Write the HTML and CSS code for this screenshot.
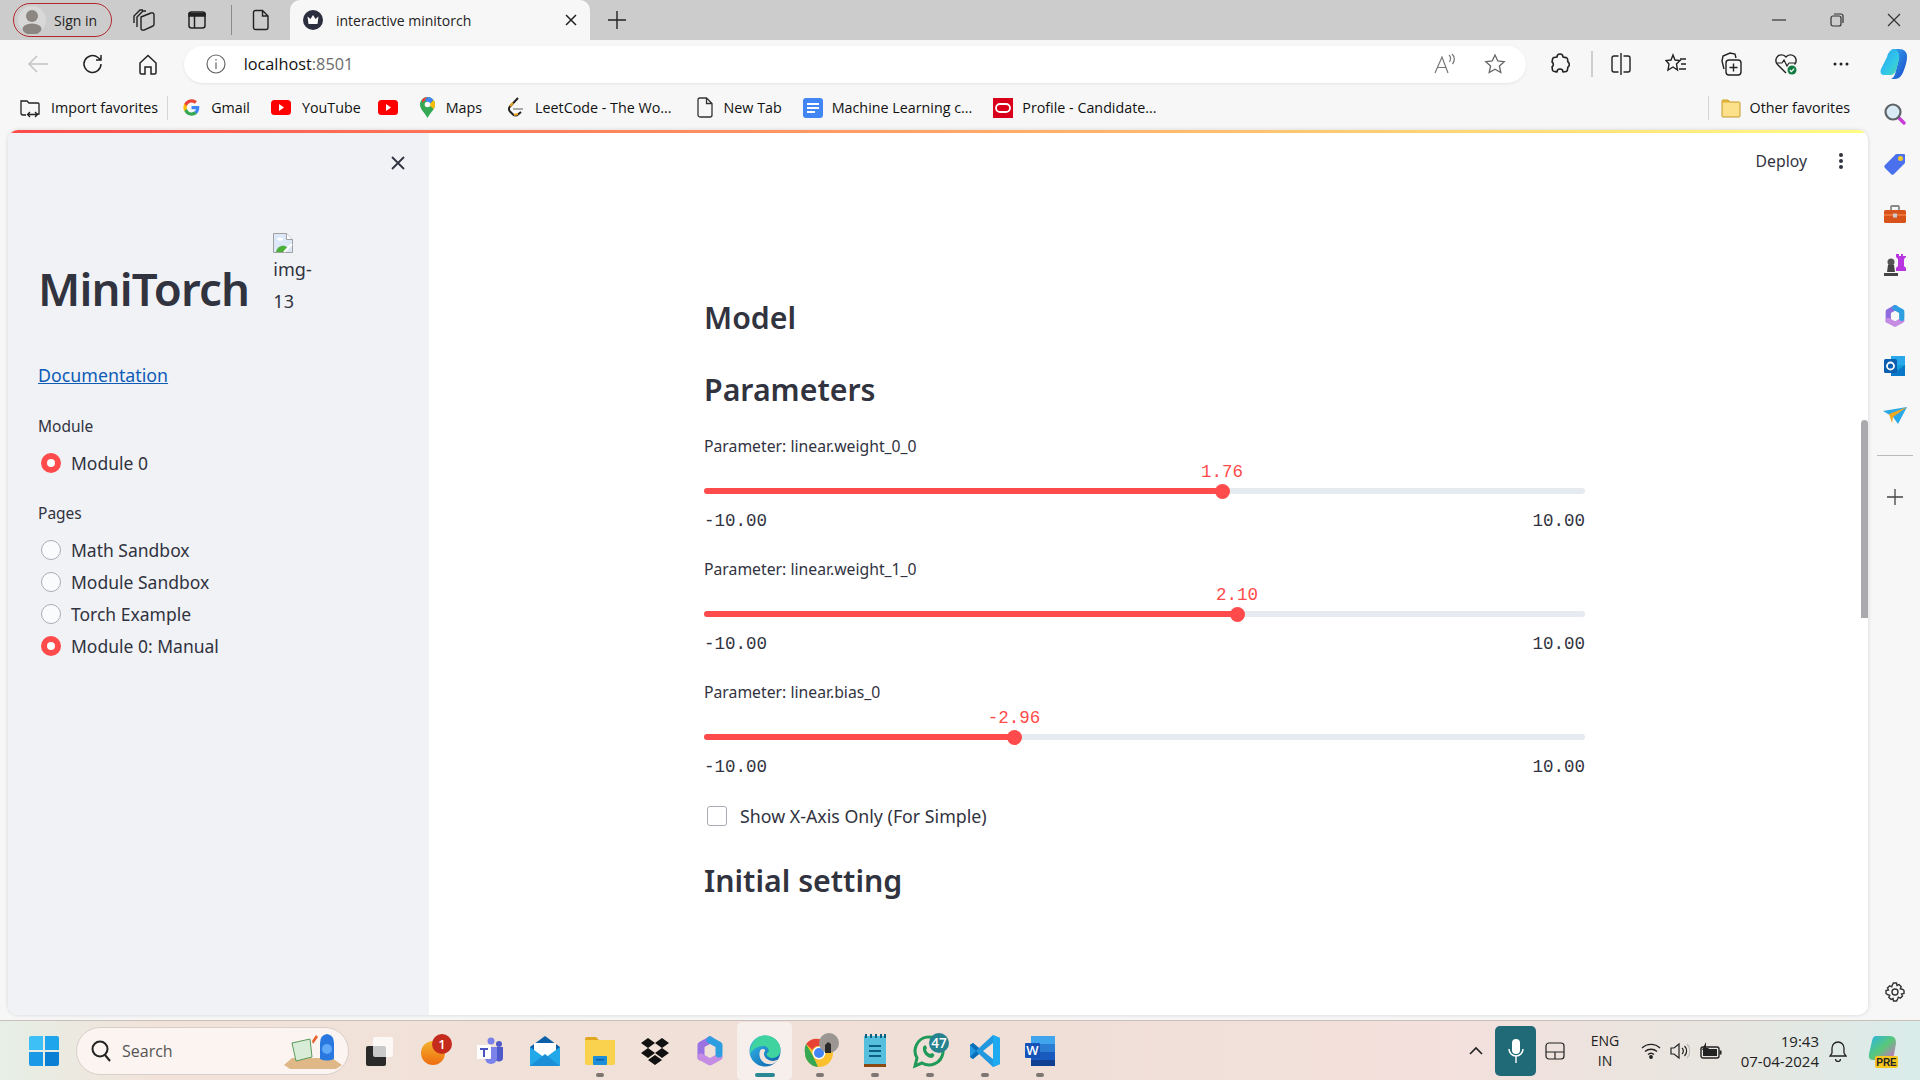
FILE: index.html
```html
<!DOCTYPE html>
<html lang="en">
<head>
    <meta charset="UTF-8">
    <title>interactive minitorch</title>
    <link rel="stylesheet" href="styles.css">
</head>
<body>
<div class="screen">
    <!-- tab strip -->
    <div class="tabstrip">
        <div class="signin">
            <svg width="28" height="28" viewBox="0 0 28 28"><circle cx="14" cy="14" r="14" fill="#d8d8d8"/><circle cx="14" cy="10" r="6" fill="#8b8681"/><ellipse cx="14" cy="23" rx="9.500" ry="5.500" fill="#8b8681"/></svg>
            <span>Sign in</span>
        </div>
        <div class="strip-btn first"><svg width="24" height="24" viewBox="0 0 24 24" fill="none" stroke="#222" stroke-width="1.400"><path d="M2 15V8l6-6h3M5 19V9l6-6h3"/><path d="M9 9l10-4a2 2 0 0 1 3 2v9a2 2 0 0 1-1 2l-9 4a2 2 0 0 1-3-2z" fill="#ccc"/></svg></div>
        <div class="strip-btn"><svg width="20" height="20" viewBox="0 0 20 20" fill="none" stroke="#222" stroke-width="1.500"><rect x="2" y="2" width="16" height="16" rx="2.500"/><path d="M2 3.500h16V6H2z" fill="#222"/><path d="M7.500 6v12"/></svg></div>
        <div class="strip-sep"></div>
        <div class="strip-btn"><svg width="18" height="22" viewBox="0 0 18 22" fill="none" stroke="#222" stroke-width="1.400"><path d="M3.500 1.500h7l5.500 5.500v11.500a2 2 0 0 1-2 2H3.500a2 2 0 0 1-2-2v-15a2 2 0 0 1 2-2zM10.500 1.500V7H16"/></svg></div>
        <div class="tab">
            <svg width="20" height="20" viewBox="0 0 20 20"><circle cx="10" cy="10" r="10" fill="#2c2f3d"/><path d="M4.500 6.500l3 2.500L10 5l2.500 4 3-2.500-1 7.500h-9z" fill="#fff"/></svg>
            <span class="tab-title">interactive minitorch</span>
            <svg class="tab-close" width="12" height="12" viewBox="0 0 12 12" stroke="#222" stroke-width="1.500"><path d="M1 1l10 10M11 1L1 11"/></svg>
        </div>
        <div class="new-tab"><svg width="18" height="18" viewBox="0 0 18 18" stroke="#222" stroke-width="1.400"><path d="M9 0v18M0 9h18"/></svg></div>
        <div class="window-btns">
            <svg width="14" height="14" viewBox="0 0 14 14" stroke="#333" stroke-width="1.200"><path d="M0 7h14"/></svg>
            <svg width="14" height="14" viewBox="0 0 14 14" fill="none" stroke="#333" stroke-width="1.200"><rect x="1" y="3" width="10" height="10" rx="2"/><path d="M4 1h7a2 2 0 0 1 2 2v7"/></svg>
            <svg width="14" height="14" viewBox="0 0 14 14" stroke="#333" stroke-width="1.200"><path d="M1 1l12 12M13 1L1 13"/></svg>
        </div>
    </div>

    <!-- address bar -->
    <div class="toolbar">
        <div class="tool"><svg width="22" height="20" viewBox="0 0 22 20" fill="none" stroke="#c4c4c4" stroke-width="1.500"><path d="M21 10H2M10 2l-8 8 8 8"/></svg></div>
        <div class="tool"><svg width="22" height="22" viewBox="0 0 22 22" fill="none" stroke="#222" stroke-width="1.500"><path d="M19 11a8.500 8.500 0 1 1-3-6.500l3 2.500M19 2v5h-5"/></svg></div>
        <div class="tool"><svg width="20" height="21" viewBox="0 0 20 21" fill="none" stroke="#222" stroke-width="1.500"><path d="M2 9l8-7.500L18 9v9.500a1.500 1.500 0 0 1-1.500 1.500H13v-7H7v7H3.500A1.500 1.500 0 0 1 2 18.500z"/></svg></div>
        <div class="addr">
            <svg width="20" height="20" viewBox="0 0 20 20" fill="none" stroke="#666" stroke-width="1.200"><circle cx="10" cy="10" r="9"/><path d="M10 8.500V15M10 5v1.500"/></svg>
            <span class="url">localhost<span class="url-port">:8501</span></span>
            <div class="addr-right">
                <svg width="24" height="22" viewBox="0 0 24 22" fill="none" stroke="#777" stroke-width="1.200"><path d="M2 20L9 4l6 16M4.500 14.500h9M16 2c2 1.500 2 5 .5 7M19 1c3 2.500 3 7 .5 10"/></svg>
                <svg width="22" height="22" viewBox="0 0 22 22" fill="none" stroke="#666" stroke-width="1.300"><path d="M11 2l2.800 6 6.400.7-4.800 4.300 1.400 6.500L11 16.200 5.200 19.500 6.600 13 1.800 8.700 8.200 8z"/></svg>
            </div>
        </div>
        <div class="tool ext"><svg width="20" height="22" viewBox="0 0 20 22" fill="none" stroke="#222" stroke-width="1.600" stroke-linejoin="round"><path d="M7 4a3 3 0 0 1 6 0c1 .5 3 .2 4 1s.5 3 1 4a3 3 0 0 1 0 5c-.5 1-.2 3-1 4s-3 .5-4 1a3 3 0 0 0-6 0c-1-.5-3-.2-4-1s-.5-3-1-4a3 3 0 0 0 0-5c.5-1 .2-3 1-4s3-.5 4-1z"/></svg></div>
        <div class="tool-sep"></div>
        <div class="tool"><svg width="20" height="22" viewBox="0 0 20 22" fill="none" stroke="#222" stroke-width="1.400"><path d="M10 0v22M7.500 3H3a2 2 0 0 0-2 2v12a2 2 0 0 0 2 2h4.500M12.500 3H17a2 2 0 0 1 2 2v12a2 2 0 0 1-2 2h-4.500"/></svg></div>
        <div class="tool"><svg width="22" height="22" viewBox="0 0 22 22" fill="none" stroke="#222" stroke-width="1.400"><path d="M8 2l2 5 5 .5-3.500 3.500 1 6L8 14l-5 3 1-6L1 7.500 6 7zM15 6h6M16 11h5M14 16h7"/></svg></div>
        <div class="tool"><svg width="22" height="24" viewBox="0 0 22 24" fill="none" stroke="#222" stroke-width="1.400"><path d="M4 17l-2-8 1-5 7-3 5 1 1 4"/><rect x="6" y="8" width="15" height="15" rx="3"/><path d="M13.500 11.500v8M9.500 15.500h8"/></svg></div>
        <div class="tool"><svg width="24" height="24" viewBox="0 0 24 24"><path d="M12 21L3.500 12.500a5.500 5.500 0 0 1 8-8l.5.500.5-.5a5.500 5.500 0 0 1 8 8" fill="none" stroke="#222" stroke-width="1.400"/><path d="M3 11h5l2-3 3 6 2-3h6" fill="none" stroke="#222" stroke-width="1.200"/><circle cx="18" cy="18" r="4.500" fill="#107c41"/><path d="M15.800 18l1.600 1.600 2.800-3" fill="none" stroke="#fff" stroke-width="1.200"/></svg></div>
        <div class="tool"><svg width="16" height="4" viewBox="0 0 16 4" fill="#222"><circle cx="2" cy="2" r="1.500"/><circle cx="8" cy="2" r="1.500"/><circle cx="14" cy="2" r="1.500"/></svg></div>
        <div class="tool copilot"><svg width="28" height="32" viewBox="0 0 28 32"><defs><linearGradient id="cpa" x1="0" y1="0" x2="1" y2="1"><stop offset="0" stop-color="#35a8f0"/><stop offset="1" stop-color="#1848c8"/></linearGradient><linearGradient id="cpb" x1="0" y1="0" x2="1" y2="1"><stop offset="0" stop-color="#2b9ff0"/><stop offset=".6" stop-color="#31c8e8"/><stop offset="1" stop-color="#4fd8a0"/></linearGradient></defs><path d="M11 1h8q8 0 8 8 0 5-3 13-3 9-9 9h-4q4-2 5-9l3-12q1-6-8-9z" fill="url(#cpa)"/><path d="M15 1q-6 0-8 8L1 21q-2 6 4 6h6q4 0 6-8l2-8q1-7-4-10z" fill="url(#cpb)"/></svg></div>
    </div>

    <!-- favorites bar -->
    <div class="favbar">
        <div class="fav import"><svg width="20" height="20" viewBox="0 0 20 20" fill="none" stroke="#222" stroke-width="1.300"><path d="M1 15V3h6l2 2h9a1 1 0 0 1 1 1v10H16M1 15a2 2 0 0 0 2 2h3M8 16.500h9M10 14l-2.500 2.500L10 19M15 14l2.500 2.500L15 19"/></svg><span>Import favorites</span></div>
        <div class="fav-sep"></div>
        <div class="fav"><svg width="17" height="17" viewBox="0 0 24 24"><path d="M23 12.300c0-.8-.1-1.600-.2-2.300H12v4.400h6.200a5.300 5.300 0 0 1-2.300 3.400v2.900h3.700c2.200-2 3.400-5 3.400-8.400z" fill="#4285f4"/><path d="M12 23.500c3.100 0 5.700-1 7.600-2.800l-3.700-2.900c-1 .7-2.300 1.100-3.900 1.100-3 0-5.500-2-6.400-4.800H1.800v3A11.500 11.500 0 0 0 12 23.500z" fill="#34a853"/><path d="M5.600 14.100a6.900 6.900 0 0 1 0-4.300v-3H1.800a11.500 11.500 0 0 0 0 10.300z" fill="#fbbc05"/><path d="M12 4.900c1.700 0 3.200.6 4.400 1.700l3.300-3.300A11.500 11.500 0 0 0 1.800 6.800l3.800 3C6.500 6.900 9 4.900 12 4.900z" fill="#ea4335"/></svg><span>Gmail</span></div>
        <div class="fav yt"><svg width="20" height="15" viewBox="0 0 20 15"><rect width="20" height="15" rx="3.500" fill="#f00"/><path d="M8 4l5 3.500L8 11z" fill="#fff"/></svg><span>YouTube</span></div>
        <div class="fav solo"><svg width="20" height="15" viewBox="0 0 20 15"><rect width="20" height="15" rx="3.500" fill="#f00"/><path d="M8 4l5 3.500L8 11z" fill="#fff"/></svg></div>
        <div class="fav maps"><svg width="15" height="21" viewBox="0 0 15 21"><path d="M7.500 21C5 16 0 12.500 0 7.500a7.500 7.500 0 0 1 15 0C15 12.500 10 16 7.500 21z" fill="#34a853"/><path d="M2 2.500a7.500 7.500 0 0 1 5.500-2.500l-3 4-2.500 1.500z" fill="#ea4335"/><path d="M7.500 0A7.500 7.500 0 0 1 13.500 3L10 7 5 3z" fill="#4285f4"/><path d="M13.500 3A7.500 7.500 0 0 1 15 7.500c0 1.500-.5 3-1.500 4.500L9 8z" fill="#fbbc05"/><circle cx="7.500" cy="7.500" r="2.800" fill="#fff"/></svg><span>Maps</span></div>
        <div class="fav leet"><svg width="17" height="21" viewBox="0 0 17 21" fill="none"><path d="M11 1L3 9.500a3.500 3.500 0 0 0 0 5l3 3a3.500 3.500 0 0 0 5 0l3-2.500" stroke="#222" stroke-width="2"/><path d="M6 12h10" stroke="#aaa" stroke-width="2"/><path d="M3 9l3-3M7 18l4-1" stroke="#f0a020" stroke-width="2"/></svg><span>LeetCode - The Wo...</span></div>
        <div class="fav"><svg width="16" height="21" viewBox="0 0 16 21" fill="none" stroke="#333" stroke-width="1.300"><path d="M3 1h6.500L15 6.500V18a2 2 0 0 1-2 2H3a2 2 0 0 1-2-2V3a2 2 0 0 1 2-2zM9.500 1v5.500H15"/></svg><span>New Tab</span></div>
        <div class="fav tight"><svg width="20" height="20" viewBox="0 0 20 20"><rect width="20" height="20" rx="3" fill="#4285f4"/><path d="M4 5h12v2H4zM4 9h12v2H4zM4 13h8v2H4z" fill="#fff"/></svg><span>Machine Learning c...</span></div>
        <div class="fav tight"><svg width="20" height="20" viewBox="0 0 20 20"><rect width="20" height="20" fill="#d9001b"/><rect x="3" y="6" width="14" height="8" rx="4" fill="none" stroke="#fff" stroke-width="1.800"/></svg><span>Profile - Candidate...</span></div>
        <div class="fav-sep other-sep"></div>
        <div class="fav other"><svg width="20" height="20" viewBox="0 0 20 20"><path d="M1 3a1 1 0 0 1 1-1h5l2 2h9a1 1 0 0 1 1 1v13a1 1 0 0 1-1 1H2a1 1 0 0 1-1-1z" fill="#fce08a" stroke="#c69a24"/><path d="M1 3a1 1 0 0 1 1-1h5l1.500 2.500H1z" fill="#e0b030"/></svg><span>Other favorites</span></div>
    </div>

    <!-- page + side panel -->
    <div class="middle">
        <div class="app">
            <div class="decoration"></div>
            <div class="app-body">
                <aside class="sidebar">
                    <div class="side-close"><svg width="14" height="14" viewBox="0 0 14 14" stroke="#31333f" stroke-width="1.800"><path d="M1 1l12 12M13 1L1 13"/></svg></div>
                    <div class="brand">
                        <h1 class="brand-name">MiniTorch</h1>
                        <div class="brand-img">
                            <svg width="20" height="20" viewBox="0 0 20 20"><path d="M.5.500h13l6 6v13H.5z" fill="#dce8f8" stroke="#a0a0a0"/><path d="M13.500.500v6h6" fill="#fff" stroke="#a0a0a0"/><path d="M3 19c1-5 5-7 9-6l3 2-4 4z" fill="#4caf3a"/><path d="M11 19l8-8" stroke="#fff" stroke-width="2"/><ellipse cx="7" cy="6" rx="3" ry="1.500" fill="#fff"/></svg>
                            <div>img-<br>13</div>
                        </div>
                    </div>
                    <a class="doc-link" href="#">Documentation</a>
                    <div class="side-label first">Module</div>
                    <div class="radios">
                        <div class="radio on"><i></i>Module 0</div>
                    </div>
                    <div class="side-label">Pages</div>
                    <div class="radios">
                        <div class="radio"><i></i>Math Sandbox</div>
                        <div class="radio"><i></i>Module Sandbox</div>
                        <div class="radio"><i></i>Torch Example</div>
                        <div class="radio on"><i></i>Module 0: Manual</div>
                    </div>
                </aside>
                <main class="main">
                    <div class="main-scroll">
                        <div class="app-header">
                            <span class="deploy">Deploy</span>
                            <svg width="6" height="18" viewBox="0 0 6 18" fill="#31333f"><circle cx="3" cy="3" r="2"/><circle cx="3" cy="9" r="2"/><circle cx="3" cy="15" r="2"/></svg>
                        </div>
                        <div class="block">
                            <h3 class="model-title">Model</h3>
                            <h3 class="params-title">Parameters</h3>
                            <div class="slider">
                                <div class="slider-label">Parameter: linear.weight_0_0</div>
                                <div class="slider-value"><span style="left:58.8%">1.76</span></div>
                                <div class="track"><div class="fill" style="width:58.8%"></div><div class="thumb" style="left:58.8%"></div></div>
                                <div class="ticks"><span>-10.00</span><span>10.00</span></div>
                            </div>
                            <div class="slider">
                                <div class="slider-label">Parameter: linear.weight_1_0</div>
                                <div class="slider-value"><span style="left:60.5%">2.10</span></div>
                                <div class="track"><div class="fill" style="width:60.5%"></div><div class="thumb" style="left:60.5%"></div></div>
                                <div class="ticks"><span>-10.00</span><span>10.00</span></div>
                            </div>
                            <div class="slider">
                                <div class="slider-label">Parameter: linear.bias_0</div>
                                <div class="slider-value"><span style="left:35.2%">-2.96</span></div>
                                <div class="track"><div class="fill" style="width:35.2%"></div><div class="thumb" style="left:35.2%"></div></div>
                                <div class="ticks"><span>-10.00</span><span>10.00</span></div>
                            </div>
                            <div class="check-row"><i></i>Show X-Axis Only (For Simple)</div>
                            <h3 class="setting-title">Initial setting</h3>
                        </div>
                    </div>
                    <div class="scrollbar"><div class="scroll-thumb"></div></div>
                </main>
            </div>
        </div>
        <div class="sidepanel">
            <svg width="24" height="24" viewBox="0 0 24 24"><path d="M15 15l6 6" stroke="#c83fd8" stroke-width="3.500" stroke-linecap="round"/><circle cx="10" cy="10" r="7.500" fill="#d8eaf4" stroke="#5f6468" stroke-width="2.200"/></svg>
            <svg width="24" height="24" viewBox="0 0 24 24"><path d="M13 2h8a1 1 0 0 1 1 1v8L11 22a2 2 0 0 1-3 0l-6-6a2 2 0 0 1 0-3z" fill="#4a70ee"/><circle cx="17.500" cy="6.500" r="2.500" fill="#f0c830"/></svg>
            <svg width="24" height="24" viewBox="0 0 24 24"><path d="M8 7V4a1 1 0 0 1 1-1h6a1 1 0 0 1 1 1v3" fill="none" stroke="#888" stroke-width="1.800"/><rect x="1" y="7" width="22" height="13" rx="1.500" fill="#d8531c"/><path d="M1 12h22" stroke="#f08040" stroke-width="1.500"/><rect x="10" y="10.500" width="4" height="4" fill="#ccc"/></svg>
            <svg width="24" height="24" viewBox="0 0 24 24"><path d="M13 1h3v2h2V1h2v2h3v1l-2 2v7l2 2v3H13v-3l2-2V6l-2-2z" fill="#b935e0"/><circle cx="8" cy="9" r="3.500" fill="#555"/><path d="M5 12h6l1 7H4zM1 20h14v3H1z" fill="#444"/></svg>
            <svg width="24" height="24" viewBox="0 0 28 32" fill="none" stroke-width="7" stroke-linejoin="round" stroke-linecap="round"><path d="M5 22V10l9-5" stroke="#8f6be0"/><path d="M23 22l-9 5-9-5" stroke="#c58ce4"/><path d="M14 5l9 5v9" stroke="#2d9fe0"/></svg>
            <svg width="24" height="24" viewBox="0 0 24 24"><path d="M8 2h14v9H8z" fill="#28a8ea"/><path d="M8 11h14v11H8z" fill="#14a0d8"/><path d="M8 11l7 5 7-5v11H8z" fill="#0a78c8"/><rect x="1" y="5" width="13" height="14" rx="1.500" fill="#0a5fb0"/><circle cx="7.500" cy="12" r="3.500" fill="none" stroke="#fff" stroke-width="1.800"/></svg>
            <svg width="24" height="24" viewBox="0 0 24 24"><path d="M0 7l24-4-9 17-5-7z" fill="#2aa8e8"/><path d="M6 10l18-7-14 10-1 6z" fill="#f0a820"/></svg>
            <div class="panel-sep"></div>
            <svg class="panel-add" width="16" height="16" viewBox="0 0 16 16" stroke="#444" stroke-width="1.300"><path d="M8 0v16M0 8h16"/></svg>
            <div class="panel-spacer"></div>
            <svg class="gear" width="20" height="20" viewBox="0 0 20 20" fill="none" stroke="#333" stroke-width="1.400"><circle cx="10" cy="10" r="3"/><path d="M8.500 1h3l.5 2.500 2-1 2.200 2.200-1 2L17.800 7.500 19 8.500v3l-2.500.5 1 2-2.200 2.200-2-1L12.500 17.500 11.500 19h-3L8 16.500l-2 1-2.200-2.200 1-2L2.500 12.500 1 11.500v-3L3.500 8l-1-2L4.700 3.800l2 1L7.500 2.500z"/></svg>
        </div>
    </div>

    <!-- windows taskbar -->
    <div class="taskbar">
        <div class="start">
            <svg width="30" height="30" viewBox="0 0 30 30"><path d="M0 2a2 2 0 0 1 2-2h12v14H0z" fill="#3cc0f5"/><path d="M16 0h12a2 2 0 0 1 2 2v12H16z" fill="#1fa5ec"/><path d="M0 16h14v14H2a2 2 0 0 1-2-2z" fill="#1a9ae6"/><path d="M16 16h14v12a2 2 0 0 1-2 2H16z" fill="#0b7fd4"/></svg>
        </div>
        <div class="search">
            <svg width="20" height="22" viewBox="0 0 20 22" fill="none" stroke="#222" stroke-width="2"><circle cx="9" cy="9" r="7.500"/><path d="M14 15l5 6"/></svg>
            <span>Search</span>
            <svg class="search-art" width="58" height="36" viewBox="0 0 58 36"><path d="M0 32l8-7h40l10 7-6 4H6z" fill="#e0b888"/><path d="M8 10l18-4 2 18-16 4z" fill="#d8ecd8" stroke="#5a9a5a"/><path d="M28 8l4-6 2 2-5 7z" fill="#e86030"/><path d="M36 26V10q0-8 7-9 7 1 7 9v16q-7 3-14 0z" fill="#2878e0"/><circle cx="43" cy="16" r="5" fill="#60a8f8"/></svg>
        </div>
        <div class="task-icons">
            <div class="ti"><svg width="30" height="30" viewBox="0 0 30 30"><rect x="1" y="10" width="20" height="20" rx="2" fill="#2a2a2a"/><rect x="8" y="1" width="20" height="20" rx="2" fill="#fff" fill-opacity=".75"/></svg></div>
            <div class="ti nudge"><svg width="32" height="34" viewBox="0 0 32 34"><defs><linearGradient id="og" x1="0" y1="0" x2="0" y2="1"><stop offset="0" stop-color="#f2b22c"/><stop offset="1" stop-color="#ef6c10"/></linearGradient></defs><circle cx="12" cy="19" r="12" fill="url(#og)"/><circle cx="21" cy="10" r="10" fill="#c42b1c"/><text x="21" y="15" class="badge-text">1</text></svg></div>
            <div class="ti"><svg width="28" height="28" viewBox="0 0 28 28"><circle cx="15" cy="4" r="3.500" fill="#7b83eb"/><circle cx="23" cy="7" r="3" fill="#5059c9"/><path d="M18 10h9v10a4 4 0 0 1-8 1z" fill="#5059c9"/><path d="M9 10h12v11a6 6 0 0 1-12 0z" fill="#7b83eb"/><rect x="1" y="8" width="14" height="14" rx="1" fill="#fff"/><path d="M4 11h8v2H9v7H7v-7H4z" fill="#4b53bc"/></svg></div>
            <div class="ti"><svg width="32" height="32" viewBox="0 0 32 32"><path d="M1 12L16 1l15 11v19H1z" fill="#0c5fa8"/><path d="M5 8h22v14H5z" fill="#fff"/><path d="M1 12l15 11 15-11v19H1z" fill="#22a8e8"/><path d="M1 31l15-12 15 12z" fill="#1a8fd8"/></svg></div>
            <div class="ti dot"><svg width="32" height="32" viewBox="0 0 32 32"><path d="M1 4a2 2 0 0 1 2-2h9l3 3h-14z" fill="#e0a820"/><path d="M1 5h30v23a2 2 0 0 1-2 2H3a2 2 0 0 1-2-2z" fill="#fbd24e"/><rect x="9" y="21" width="14" height="9" rx="1" fill="#1a8fd8"/><rect x="12" y="24" width="8" height="1.500" fill="#0c5fa8"/></svg></div>
            <div class="ti"><svg width="30" height="30" viewBox="0 0 30 30" fill="#111"><path d="M8 2l7 5-7 5-7-5zM22 2l7 5-7 5-7-5zM8 12l7 5-7 5-7-5zM22 12l7 5-7 5-7-5zM15 19l7 5-7 5-7-5z"/></svg></div>
            <div class="ti"><svg width="28" height="32" viewBox="0 0 28 32" fill="none" stroke-width="7" stroke-linejoin="round" stroke-linecap="round"><path d="M5 22V10l9-5" stroke="#9a72e2"/><path d="M23 22l-9 5-9-5" stroke="#c58ce4"/><path d="M14 5l9 5v9" stroke="#2d9fe0"/></svg></div>
            <div class="ti active"><svg width="32" height="32" viewBox="0 0 32 32"><defs><linearGradient id="eg" x1="0" y1="0" x2="1" y2="1"><stop offset="0" stop-color="#35c1f1"/><stop offset="1" stop-color="#0c59a4"/></linearGradient></defs><circle cx="16" cy="16" r="15.500" fill="url(#eg)"/><path d="M16 .5C25 .5 31.500 7 31.500 15c0 5-4 8-8 8-3 0-6-2-6-4 0-1 1-1 2-2 1-2-1-6-5-6C8 11 3 15 1 19 1 9 7 .5 16 .5z" fill="#3fd3a0"/><path d="M11 16c-2 5 1 12 8 13 4 1 8-1 11-5-3 2-8 3-12 0-3-2-4-6-2-8 1-2-4-3-5 0z" fill="#f2e4dc"/></svg></div>
            <div class="ti dot nudge"><svg width="36" height="36" viewBox="0 0 36 36"><circle cx="15" cy="20" r="14" fill="#fbc02d"/><path d="M15 6a14 14 0 0 1 12 7H15a7 7 0 0 0-6.500 4L2 11A14 14 0 0 1 15 6z" fill="#e94335"/><path d="M1 20a14 14 0 0 1 1-9l7 12 5 11A14 14 0 0 1 1 20z" fill="#34a853"/><circle cx="15" cy="20" r="6.500" fill="#fff"/><circle cx="15" cy="20" r="5" fill="#4285f4"/><circle cx="25" cy="10" r="10" fill="#9b9692"/><path d="M21 20v-8l3-3 3 2v9z" fill="#2a2a2a"/></svg></div>
            <div class="ti dot"><svg width="24" height="36" viewBox="0 0 24 36"><path d="M1 3h22v30H1z" fill="#55bfdd"/><path d="M1 31h22v3H1z" fill="#8b4a14"/><path d="M6 12h12v2H6zM6 17h12v2H6zM6 22h12v2H6z" fill="#0b5f80"/><path d="M3 1v4M8 1v4M13 1v4M18 1v4M22 1v4" stroke="#0b5f80" stroke-width="2"/></svg></div>
            <div class="ti dot nudge"><svg width="40" height="36" viewBox="0 0 40 36"><path d="M3 33l2-8a14 14 0 1 1 5 5z" fill="none" stroke="#1f9a58" stroke-width="3"/><path d="M11 14c2-3 3-2 4 1l-1 2c1 2 2 3 4 4l2-1c3 1 3 3 0 5-5 0-10-5-9-11z" fill="#1f9a58"/><circle cx="27" cy="10" r="10" fill="#26828f"/><text x="27" y="15" class="badge-text wide">47</text></svg></div>
            <div class="ti dot"><svg width="32" height="34" viewBox="0 0 32 34"><path d="M24 1l7 3v26l-7 3-14-13-6 5-3-2v-12l3-2 6 5z" fill="#2198e0"/><path d="M24 1l7 3v26l-7 3z" fill="#1eaaf1"/><path d="M24 9L14 17l10 8z" fill="#f2e4dc"/><path d="M1 11l3-2 6 5-3 3zM1 23l3 2 6-5-3-3z" fill="#0a6fb8"/></svg></div>
            <div class="ti dot"><svg width="32" height="32" viewBox="0 0 32 32"><rect x="7" y="1" width="24" height="30" rx="1" fill="#2b7cd3"/><path d="M7 1h24v8H7z" fill="#41a5ee"/><path d="M7 17h24v8H7z" fill="#185abd"/><path d="M7 25h24v6H7z" fill="#103f91"/><rect x="1" y="8" width="15" height="15" rx="1" fill="#1553b8"/><text x="8.500" y="20" class="badge-text">W</text></svg></div>
        </div>
        <div class="tray">
            <svg class="tray-chev" width="14" height="9" viewBox="0 0 14 9" fill="none" stroke="#222" stroke-width="1.600"><path d="M1 8l6-6 6 6"/></svg>
            <div class="mic"><svg width="16" height="26" viewBox="0 0 16 26" fill="#fff"><rect x="4" y="1" width="8" height="15" rx="4"/><path d="M1 11a7 7 0 0 0 14 0" fill="none" stroke="#fff" stroke-width="1.500"/><path d="M7.300 18h1.400v7H7.300z"/></svg></div>
            <svg class="touchpad" width="20" height="20" viewBox="0 0 20 20" fill="none" stroke="#222" stroke-width="1.200"><rect x="1" y="2" width="18" height="16" rx="3"/><path d="M1 11h18M10 11v7"/></svg>
            <div class="lang">ENG<br>IN</div>
            <svg class="wifi" width="20" height="16" viewBox="0 0 20 16" fill="none" stroke="#222" stroke-width="1.400"><path d="M1 5a13 13 0 0 1 18 0M4 8.500a9 9 0 0 1 12 0M7 11.500a4.500 4.500 0 0 1 6 0"/><circle cx="10" cy="14" r="1.200" fill="#222"/></svg>
            <svg class="vol" width="20" height="18" viewBox="0 0 20 18" fill="none" stroke="#222" stroke-width="1.200"><path d="M1 6v6h3l5 4V2L4 6z"/><path d="M12 6a4 4 0 0 1 0 6M14.500 4a7 7 0 0 1 0 10"/><path d="M17 2a10 10 0 0 1 0 14" stroke="#bbb"/></svg>
            <svg class="batt" width="22" height="18" viewBox="0 0 22 18"><rect x="1" y="5" width="18" height="11" rx="2" fill="none" stroke="#222" stroke-width="1.400"/><rect x="3" y="7" width="14" height="7" fill="#222"/><rect x="19.500" y="8.500" width="2" height="4" fill="#222"/><path d="M6 0L2 8h3l-1 5 5-7H6z" fill="#222"/></svg>
            <div class="clock">19:43<br>07-04-2024</div>
            <svg class="bell" width="18" height="22" viewBox="0 0 18 22" fill="none" stroke="#222" stroke-width="1.300"><path d="M1 16l2-3V8a6 6 0 0 1 12 0v5l2 3zM6.500 19a2.500 2.500 0 0 0 5 0"/></svg>
            <svg class="copilot-pre" width="30" height="34" viewBox="0 0 30 34"><defs><linearGradient id="pr" x1="0" y1="0" x2="1" y2="1"><stop offset="0" stop-color="#28b4e8"/><stop offset=".5" stop-color="#58c878"/><stop offset="1" stop-color="#e060d0"/></linearGradient></defs><path d="M8 2h14q6 0 6 7l-2 12q-2 5-7 5H5q-5 0-4-6L4 7q1-5 4-5z" fill="url(#pr)"/><rect x="7" y="22" width="23" height="12" rx="2" fill="#f8c820"/><text x="18.500" y="32" class="pre-text">PRE</text></svg>
        </div>
    </div>
</div>
</body>
</html>
```

FILE: styles.css
```css
* {
    box-sizing: border-box;
    margin: 0;
    padding: 0;
}
body {
    font-family: "Noto Sans", sans-serif;
    background-color: #f7f7f7;
    color: #31333f;
    overflow: hidden;
}
svg {
    display: block;
    flex: none;
}
.screen {
    width: 1920px;
    height: 1080px;
    display: flex;
    flex-direction: column;
}

/* tab strip */
.tabstrip {
    height: 40px;
    background-color: #cccccc;
    display: flex;
    align-items: center;
    font-family: "Open Sans", sans-serif;
    font-size: 14px;
    color: #222;
}
.signin {
    width: 99px;
    height: 34px;
    margin-left: 13px;
    padding-left: 4px;
    border: 1.5px solid #b2282d;
    border-radius: 17px;
    display: flex;
    align-items: center;
    gap: 8px;
}
.strip-btn {
    width: 40px;
    display: flex;
    justify-content: center;
}
.strip-btn.first {
    margin-left: 12px;
    margin-right: 13px;
}
.strip-sep {
    width: 1px;
    height: 30px;
    margin: 0 9px 0 14px;
    background-color: #8d8d8d;
}
.tab {
    width: 300px;
    height: 40px;
    margin-left: 9px;
    padding: 0 13px 0 13px;
    background-color: #f7f7f7;
    border-radius: 10px 10px 0 0;
    display: flex;
    align-items: center;
    gap: 13px;
}
.tab-title {
    flex: 1;
    font-size: 14px;
}
.new-tab {
    margin-left: 18px;
}
.window-btns {
    margin-left: auto;
    width: 148px;
    padding-right: 19px;
    display: flex;
    justify-content: space-between;
}

/* address bar */
.toolbar {
    height: 48px;
    padding-left: 11px;
    background-color: #f7f7f7;
    display: flex;
    align-items: center;
}
.tool {
    width: 55px;
    display: flex;
    justify-content: center;
}
.addr {
    width: 1345px;
    height: 37px;
    margin-left: 8px;
    padding: 0 20px 0 22px;
    background-color: #fff;
    border-radius: 19px;
    box-shadow: 0 1px 3px rgba(0, 0, 0, 0.08);
    display: flex;
    align-items: center;
    gap: 18px;
}
.url {
    font-family: "Open Sans", sans-serif;
    font-size: 16.3px;
    color: #111;
}
.url-port {
    color: #6d6d6d;
}
.addr-right {
    margin-left: auto;
    display: flex;
    align-items: center;
    gap: 27px;
}
.ext {
    margin-left: 7px;
}
.tool-sep {
    width: 2px;
    height: 26px;
    background-color: #cfcfcf;
    margin-left: 3px;
    margin-right: 1px;
}
.copilot {
    width: 52px;
}

/* favorites bar */
.favbar {
    height: 42px;
    padding: 0 0 3px 20px;
    background-color: #f7f7f7;
    display: flex;
    align-items: center;
    font-family: "Open Sans", sans-serif;
    font-size: 14.3px;
    color: #111;
}
.fav {
    display: flex;
    align-items: center;
    gap: 11px;
    margin-right: 21px;
}
.fav.import {
    margin-right: 9px;
}
.fav.yt {
    margin-right: 17px;
}
.fav.solo {
    margin-right: 22px;
}
.fav.maps {
    margin-right: 25px;
}
.fav.leet {
    margin-right: 25px;
}
.fav.tight {
    gap: 9px;
}
.fav.other {
    margin-right: 70px;
    gap: 9px;
}
.fav-sep {
    width: 1px;
    height: 24px;
    margin-right: 15px;
    background-color: #d5d5d5;
}
.other-sep {
    margin-left: auto;
    margin-right: 12px;
}

/* page */
.middle {
    flex: 1;
    min-height: 0;
    display: flex;
    padding-bottom: 5px;
    padding-left: 8px;
}
.app {
    width: 1860px;
    background-color: #fff;
    border-radius: 10px;
    box-shadow: 0 0 4px rgba(0, 0, 0, 0.14);
    overflow: hidden;
    display: flex;
    flex-direction: column;
}
.decoration {
    height: 3px;
    background: linear-gradient(90deg, #ff4b4b, #fffd80);
    flex: none;
}
.app-body {
    flex: 1;
    min-height: 0;
    display: flex;
}
.sidebar {
    width: 421px;
    padding-left: 30px;
    background-color: #f0f2f6;
    flex: none;
}
.side-close {
    height: 59px;
    padding-right: 24px;
    display: flex;
    justify-content: flex-end;
    align-items: center;
}
.brand {
    height: 84px;
    margin-top: 41px;
    display: flex;
    align-items: flex-end;
    gap: 24px;
}
.brand-name {
    font-size: 45.5px;
    font-weight: 600;
    line-height: 84px;
    letter-spacing: -0.8px;
    margin-bottom: -13px;
}
.brand-img {
    font-size: 18px;
    line-height: 32px;
    align-self: flex-start;
}
.doc-link {
    display: block;
    margin-top: 42px;
    font-size: 17.8px;
    line-height: 32px;
    color: #0d5cb6;
}
.side-label {
    margin-top: 22px;
    font-size: 15.5px;
    line-height: 24px;
}
.side-label.first {
    margin-top: 23px;
}
.radios {
    margin-top: 9px;
}
.radio {
    height: 32px;
    font-size: 17.5px;
    display: flex;
    align-items: center;
    gap: 10px;
    padding-left: 3px;
}
.radio i {
    width: 20px;
    height: 20px;
    border: 1px solid #a9acb3;
    border-radius: 50%;
    background-color: #fafbfd;
}
.radio.on i {
    border: 6px solid #ff4b4b;
    background-color: #fff;
}
.main {
    flex: 1;
    display: flex;
    min-width: 0;
}
.main-scroll {
    flex: 1;
    min-width: 0;
}
.app-header {
    height: 55px;
    padding-right: 16px;
    display: flex;
    align-items: center;
    justify-content: flex-end;
    gap: 31px;
    font-size: 15.75px;
}
.block {
    width: 881px;
    margin: 0 auto;
}
.block h3 {
    font-size: 30.3px;
    font-weight: 600;
    line-height: 44px;
}
.model-title {
    margin-top: 108px;
}
.params-title {
    margin-top: 28px;
}
.slider {
    margin-top: 26px;
    height: 97px;
}
.params-title + .slider {
    margin-top: 22px;
}
.slider-label {
    font-size: 15.75px;
    line-height: 24px;
}
.slider-value {
    position: relative;
    height: 24px;
    margin-top: 2px;
    font-family: "Liberation Mono", monospace;
    font-size: 17.5px;
    line-height: 24px;
    color: #ff4b4b;
}
.slider-value span {
    position: absolute;
    transform: translateX(-50%);
}
.track {
    position: relative;
    height: 6px;
    margin-top: 4px;
    border-radius: 3px;
    background-color: #e6eaf1;
}
.fill {
    height: 100%;
    border-radius: 3px;
    background-color: #ff4b4b;
}
.thumb {
    position: absolute;
    top: -4px;
    width: 15px;
    height: 15px;
    margin-left: -7px;
    border-radius: 50%;
    background-color: #ff4b4b;
}
.ticks {
    margin-top: 15px;
    display: flex;
    justify-content: space-between;
    font-family: "Liberation Mono", monospace;
    font-size: 17.5px;
    line-height: 24px;
}
.check-row {
    height: 32px;
    margin-top: 23px;
    padding-left: 3px;
    display: flex;
    align-items: center;
    gap: 13px;
    font-size: 17.8px;
}
.check-row i {
    width: 20px;
    height: 20px;
    border: 1px solid #a9acb3;
    border-radius: 3px;
}
.setting-title {
    margin-top: 27px;
}
.scrollbar {
    width: 8px;
    flex: none;
    padding-top: 287px;
}
.scroll-thumb {
    width: 7px;
    height: 198px;
    margin-left: 1px;
    background-color: #a9a9ae;
    border-radius: 4px 4px 0 0;
}
.sidepanel {
    flex: 1;
    margin-top: -28px;
    padding-left: 2px;
    display: flex;
    flex-direction: column;
    align-items: center;
    gap: 26.4px;
}
.panel-sep {
    width: 36px;
    height: 1px;
    background-color: #bbb;
}
.panel-add {
    margin-top: 7px;
}
.panel-spacer {
    flex: 1;
}
.gear {
    margin-bottom: 13px;
}

/* windows taskbar */
.taskbar {
    height: 60px;
    flex: none;
    border-top: 1px solid #c9bfba;
    background: linear-gradient(90deg, #e6efe6 0, #f2e3da 8%, #efdfd6 50%, #f3e0dc 75%, #e8e6e0 90%, #d9ecea 100%);
    display: flex;
    align-items: center;
    padding-left: 29px;
    position: relative;
}
.start {
    width: 30px;
}
.search {
    width: 273px;
    height: 48px;
    margin-left: 17px;
    padding-left: 14px;
    background-color: #fbf4f0;
    border: 1px solid #d8cfca;
    border-radius: 24px;
    display: flex;
    align-items: center;
    gap: 11px;
    font-family: "Open Sans", sans-serif;
    font-size: 16px;
    color: #555;
}
.search-art {
    margin-left: auto;
    margin-right: 6px;
}
.task-icons {
    display: flex;
    align-items: center;
    margin-left: 3px;
}
.ti {
    position: relative;
    width: 55px;
    height: 58px;
    display: flex;
    align-items: center;
    justify-content: center;
}
.ti.nudge svg {
    margin-left: 4px;
}
.ti.active {
    background-color: #f6efeb;
    border-radius: 5px;
}
.ti.active::after,
.ti.dot::after {
    content: "";
    position: absolute;
    bottom: 3px;
    left: 50%;
    width: 8px;
    height: 4px;
    margin-left: -4px;
    border-radius: 2px;
    background-color: #7d7672;
}
.ti.active::after {
    width: 20px;
    margin-left: -10px;
    background-color: #2a8895;
}
.badge-text {
    font-family: "Open Sans", sans-serif;
    font-size: 13px;
    font-weight: 600;
    fill: #fff;
    text-anchor: middle;
}
.badge-text.wide {
    font-size: 13.5px;
}
.pre-text {
    font-family: "Liberation Sans", sans-serif;
    font-size: 10px;
    font-weight: 700;
    fill: #222;
    text-anchor: middle;
}
.tray {
    margin-left: auto;
    height: 100%;
    display: flex;
    align-items: center;
    font-family: "Open Sans", sans-serif;
    font-size: 14px;
    color: #222;
}
.mic {
    width: 41px;
    height: 50px;
    margin-left: 12px;
    background-color: #206a78;
    border-radius: 5px;
    display: flex;
    align-items: center;
    justify-content: center;
}
.touchpad {
    margin-left: 9px;
}
.lang {
    width: 50px;
    margin-left: 15px;
    text-align: center;
    line-height: 20px;
}
.wifi {
    margin-left: 11px;
}
.vol {
    margin-left: 9px;
}
.batt {
    margin-left: 10px;
}
.clock {
    width: 84px;
    margin-left: 13px;
    font-size: 15px;
    text-align: right;
    line-height: 20px;
    white-space: nowrap;
}
.bell {
    margin-left: 10px;
}
.copilot-pre {
    margin-left: 21px;
    margin-right: 22px;
}
```
